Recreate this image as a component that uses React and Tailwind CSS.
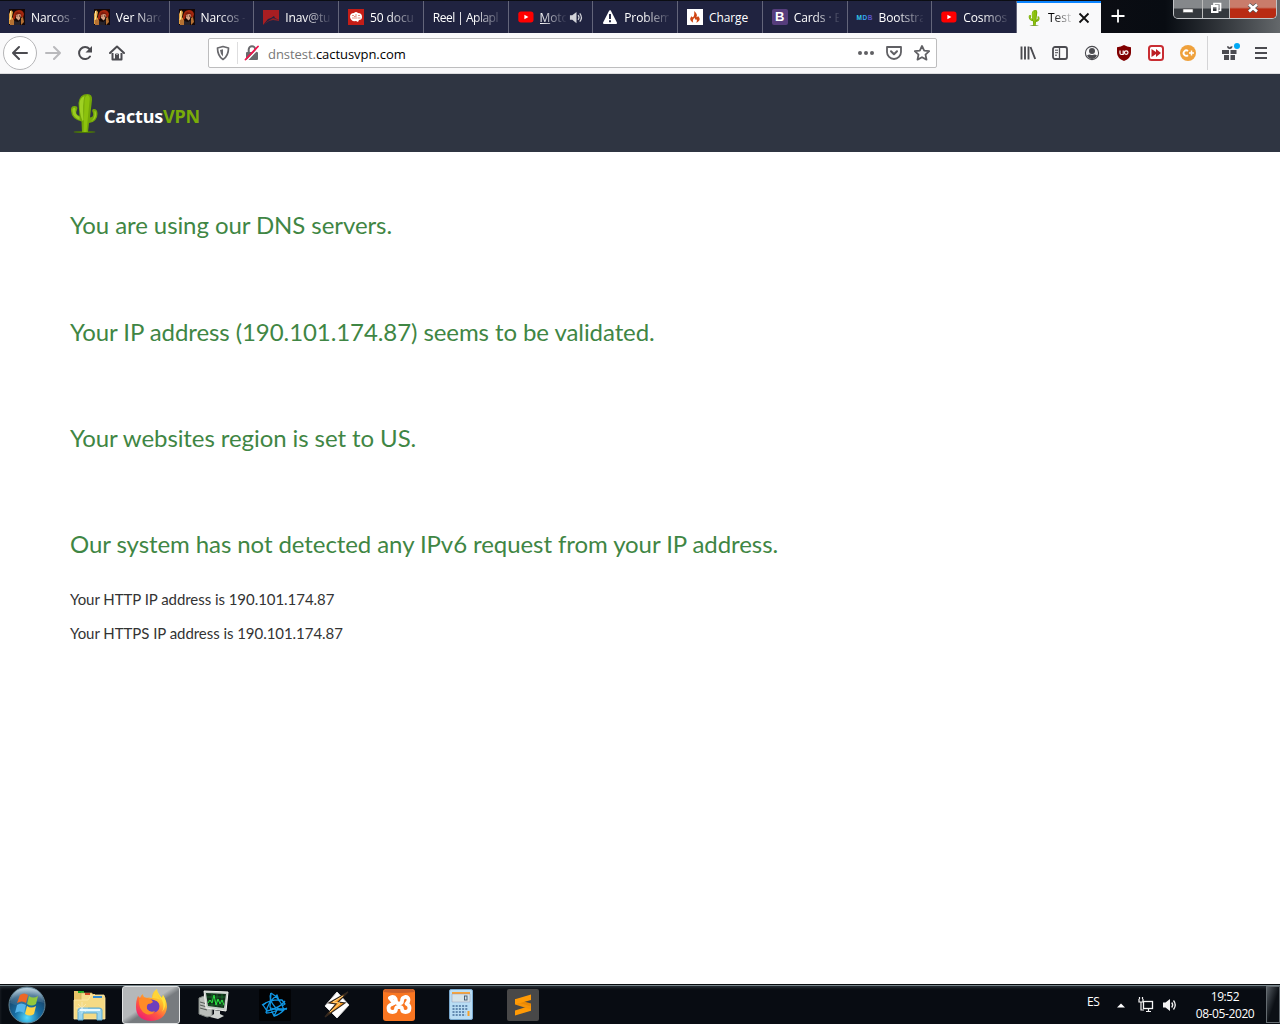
import React from "react";

const Portrait = () => (
  <svg viewBox="0 0 16 16" className="size-4 shrink-0">
    <rect width="16" height="16" fill="#140706" />
    <path d="M0 5l2-4 2 2-1 5 2 3-2 4H0z" fill="#e0a040" />
    <path d="M4 7Q5 1 10 1q4 0 5 4l-1 4-2-1-1-3-4 1-1 4-2 1z" fill="#a3260e" />
    <path d="M7 5q3-1 5 0l-1 5-1.500 1.500L7 9z" fill="#d8a283" />
    <path d="M6 5l2-2 4 1 1 2-3-1-3 1z" fill="#7b1a0b" />
    <path d="M7.500 7h1M10 7h1" stroke="#3c130d" />
    <path d="M1 10l4 1 1 5H1zM12 9l2-1 1 5-3 3z" fill="#b57133" />
    <path d="M5 12l4 1 3-2-1 5H5z" fill="#26222a" />
    <path d="M1.500 2l.5 5-1 4" stroke="#fff0a8" fill="none" />
  </svg>
);
const RedFlag = () => (
  <svg viewBox="0 0 16 16" className="size-4 shrink-0">
    <path d="M0 1h16v10l-4-2-1-2-3 2-3 1-5 6z" fill="#a81e22" />
    <path d="M0 16l5-4 5-3 6 2v1l-6-1-4 1z" fill="#8c2128" />
  </svg>
);
const Brain = () => (
  <svg viewBox="0 0 16 16" className="size-4 shrink-0">
    <rect width="16" height="16" fill="#c41d17" />
    <path d="M2 8q0-4 4-4 2-2 4 0 4 0 4 4 0 3-3 3l-1 2-2-1q-5 1-6-4z" fill="#fff" />
    <path d="M4 6.500h2M4 9h3M8 5v5M10 6.500h2M9.500 9h3M6 7.500h1.500" stroke="#d9604f" fill="none" strokeWidth=".7" />
  </svg>
);
const Tube = () => (
  <svg viewBox="0 0 16 16" className="size-4 shrink-0">
    <rect x="0.3" y="2.5" width="15.2" height="11" rx="2.7" fill="#f00" />
    <path d="M6.400 5.800v4.500l4-2.200z" fill="#fff" />
  </svg>
);
const Warning = () => (
  <svg viewBox="0 0 16 16" className="size-4 shrink-0">
    <path d="M8 2.200L14 14H2z" fill="#fff" stroke="#fff" strokeWidth="2" strokeLinejoin="round" />
    <path d="M8 5v5M8 11.200v2" stroke="#202340" strokeWidth="1.900" />
  </svg>
);
const Flame = () => (
  <svg viewBox="0 0 16 16" className="size-4 shrink-0">
    <rect width="16" height="16" fill="#fff" />
    <path d="M7 2q4 3 2.500 6 1 .5 1.500-1Q14 10 11.800 12q-1 1.300-2.500 1.700 1.500-2-.2-3.800-.3 1-1 .5-.6-1 0-2-3.200 2-1.900 5.300Q3 12 3.200 9.500 3.500 8 5 7q-.3 1.500.6 1.300Q7 8 7.200 5.500 7.500 3.700 7 2z" fill="#cf4513" />
  </svg>
);
const BootB = () => (
  <span className="flex size-4 shrink-0 items-center justify-center rounded-[2px] bg-[#563d7c] font-['Liberation_Sans'] text-[13px] leading-4 font-bold text-white">B</span>
);
const Mdb = () => (
  <span className="flex size-4 shrink-0 items-center justify-between pt-px font-['Liberation_Sans'] text-[6.5px] font-bold">
    <span className="text-[#31c7ee]">M</span><span className="text-[#36a5f5]">D</span><span className="text-[#5b55c8]">B</span>
  </span>
);
const Cactus = ({ className }) => (
  <svg viewBox="0 0 27 39" className={className}>
    <ellipse cx="14" cy="38" rx="11" ry="1" fill="#4b7607" />
    <path d="M8 9Q9 0 17 0q5 0 4.500 6L19.500 23.500q4-.5 3-4.500-2-4 1-4 3.500 0 3.500 5 0 7.500-8.500 9l-1 9H11.500l-.5-10.500Q1 25 .5 17 0 12 4 12q4 0 2.500 4Q4 20 9 22z" fill="#74a708" />
    <path d="M17 1q3 1 2 6l-3 31h-3l1-31q0-5 3-6z" fill="#8cc20d" />
    <path d="M9 10q0-6 5-8-2 7-1 24l-1 1q-3-7-3-17z" fill="#9ed123" />
    <path d="M2 15q2-3 3 0-1 5 4 8v3Q2 23 2 17zM24 17q2 0 1.500 5-1 4-5 5 4-3 3.500-8z" fill="#9acb20" />
  </svg>
);
const Speaker = ({ className }) => (
  <svg viewBox="0 0 16 16" className={className}>
    <path d="M1 5.500h2.500L8 2v12l-4.500-3.500H1z" fill="currentColor" />
    <path d="M9.700 5.500q2 2.500 0 5M11.500 3.500q3.500 4.500 0 9" fill="none" stroke="currentColor" strokeWidth="1.300" />
  </svg>
);

const tabs = [
  { icon: <Portrait />, title: "Narcos -" },
  { icon: <Portrait />, title: "Ver Narc" },
  { icon: <Portrait />, title: "Narcos -" },
  { icon: <RedFlag />, title: "Inav@tu" },
  { icon: <Brain />, title: "50 docu" },
  { icon: null, title: "Reel | Aplapl" },
  { icon: <Tube />, title: "Moto", sound: true },
  { icon: <Warning />, title: "Problem" },
  { icon: <Flame />, title: "Charge", plain: true },
  { icon: <BootB />, title: "Cards · B" },
  { icon: <Mdb />, title: "Bootstra" },
  { icon: <Tube />, title: "Cosmos" },
];

function Tab({ icon, title, sound, plain }) {
  return (
    <div className="flex h-8 w-[84.75px] shrink-0 items-center border-r border-[#63657a] pl-[9px] text-white">
      {icon}
      <div className={`${icon ? "ml-[6px]" : ""} ${sound ? "w-[26px] shrink-0" : "mr-2 flex-1"} overflow-hidden whitespace-nowrap pt-px text-[12px] leading-[17px] ${icon ? "tracking-[-0.1px]" : "tracking-[-0.5px]"} ${plain ? "" : "[mask-image:linear-gradient(to_right,black_calc(100%_-_26px),transparent_105%)]"}`}>
        {sound ? <><span className="underline underline-offset-1">M</span>{title.slice(1)}</> : title}
      </div>
      {sound && <Speaker className="ml-[3px] size-[15px] shrink-0 text-[#d2d3d9]" />}
    </div>
  );
}

const WindowButtons = () => (
  <div className="ml-auto mr-[3px] -mt-px flex h-[19px] w-[104px] self-start overflow-hidden rounded-b-[5px] border border-t-0 border-[#c2c4c7] bg-[#55595d]">
    <div className="flex w-[29px] items-center justify-center border-r border-[#bbb] bg-linear-to-b from-[#85888b] from-45% to-[#34383d] to-50%">
      <svg viewBox="0 0 14 16" className="h-4 w-[14px]"><rect x="2" y="8" width="10" height="3.500" fill="#fff" stroke="#555" strokeWidth=".6" /></svg>
    </div>
    <div className="flex w-[27px] items-center justify-center border-r border-[#bbb] bg-linear-to-b from-[#85888b] from-45% to-[#34383d] to-50%">
      <svg viewBox="0 0 14 14" className="mb-[2px] size-[14px]" fill="none"><path d="M5 4V2.500h6.500v7H9.500" stroke="#fff" strokeWidth="1.700" /><rect x="3" y="5" width="5.500" height="6" stroke="#fff" strokeWidth="2" /></svg>
    </div>
    <div className="flex flex-1 items-center justify-center bg-linear-to-b from-[#c97c6b] from-40% to-[#b92b13] to-50%">
      <svg viewBox="0 0 14 14" className="mb-[2px] size-[14px]"><path d="M3 3.500l8 7M11 3.500l-8 7" stroke="#555" strokeWidth="4" /><path d="M3 3.500l8 7M11 3.500l-8 7" stroke="#fff" strokeWidth="2.600" /></svg>
    </div>
  </div>
);

function TabStrip() {
  return (
    <div className="flex h-[33px] bg-linear-to-r from-[#0b0d13] from-[86%] via-[#080c12] via-[91%] to-[#64686b] pt-px">
      <div className="flex w-[1017px] shrink-0 overflow-hidden bg-[#202340]">
        {tabs.map((t, i) => <Tab key={i} {...t} />)}
      </div>
      <div className="flex w-[84px] shrink-0 items-center border-t-2 border-[#0a84ff] bg-[#f9f9fa] pl-[11px] text-black">
        <Cactus className="mb-px h-4 w-[12px] shrink-0" />
        <div className="ml-2 w-[23px] overflow-hidden whitespace-nowrap text-[12px] leading-4 [mask-image:linear-gradient(to_right,black_20%,transparent_115%)]">Test</div>
        <svg viewBox="0 0 12 12" className="ml-[7px] size-3 shrink-0"><path d="M1.500 1.500l9 9M10.500 1.500l-9 9" stroke="#111" strokeWidth="1.800" /></svg>
      </div>
      <svg viewBox="0 0 14 14" className="ml-[10px] mt-2 size-[14px] shrink-0"><path d="M7 .5v13M.5 7h13" stroke="#fff" strokeWidth="1.800" /></svg>
      <WindowButtons />
    </div>
  );
}

function Toolbar() {
  return (
    <div className="flex h-[41px] items-center border-b border-[#dcdcde] bg-[#f9f9fa] text-[#4b4b50]">
      <div className="ml-[3px] flex size-[34px] shrink-0 items-center justify-center rounded-full border border-[#b5b5b7] bg-white">
        <svg viewBox="0 0 16 16" className="size-4" fill="none" stroke="currentColor" strokeWidth="2" strokeLinecap="round" strokeLinejoin="round"><path d="M15 8H1M7 2L1 8l6 6" /></svg>
      </div>
      <svg viewBox="0 0 16 16" className="ml-2 size-4 shrink-0 text-[#b9b9bc]" fill="none" stroke="currentColor" strokeWidth="2" strokeLinecap="round" strokeLinejoin="round"><path d="M1 8h14M9 2l6 6-6 6" /></svg>
      <svg viewBox="0 0 16 16" className="ml-4 size-4 shrink-0" fill="none" stroke="currentColor" strokeWidth="2"><path d="M13 11.500A6 6 0 1 1 12.500 4" strokeLinecap="round" /><path d="M15 1v6.500H8.500z" fill="currentColor" stroke="none" /></svg>
      <svg viewBox="0 0 16 16" className="ml-4 size-4 shrink-0" fill="none" stroke="currentColor" strokeWidth="2" strokeLinejoin="round"><path d="M1 8l7-6.500L15 8" strokeLinecap="round" /><path d="M3.500 8v6.500h9V8M8 14v-4" /><path d="M6.500 14V9h3v5" strokeWidth="1" /></svg>

      <div className="ml-[83px] flex h-[30px] w-[729px] shrink-0 items-center rounded-[2px] border border-[#bdbdbe] bg-white">
        <svg viewBox="0 0 16 16" className="ml-[6px] size-4 shrink-0 text-[#69696d]"><path d="M8 1.500l5.500 1.500q0 8-5.500 11.500Q2.500 11 2.500 3z" fill="none" stroke="currentColor" strokeWidth="1.700" strokeLinejoin="round" /><path d="M8 4.200v7.200Q5.300 9 5 5z" fill="currentColor" /></svg>
        <div className="ml-[6px] h-[22px] w-px bg-[#dededf]" />
        <svg viewBox="0 0 16 16" className="ml-[6px] size-4 shrink-0"><path d="M4.700 8V4.500a3.300 3.300 0 0 1 6.600 0V8" fill="none" stroke="#69696d" strokeWidth="2" /><rect x="2" y="7" width="12" height="8" rx="1" fill="#69696d" /><path d="M2.500 16L15 2.800" stroke="#fff" strokeWidth="1.500" /><path d="M1.500 14.500l12.500-13" stroke="#f1144c" strokeWidth="1.800" strokeLinecap="round" /></svg>
        <div className="ml-2 whitespace-nowrap pt-px text-[13px] leading-5 tracking-[-0.05px] text-black"><span className="text-[#777]">dnstest.</span>cactusvpn.com</div>
        <svg viewBox="0 0 16 16" className="ml-auto size-4 shrink-0 fill-[#606064]"><circle cx="2" cy="8" r="2" /><circle cx="8" cy="8" r="2" /><circle cx="14" cy="8" r="2" /></svg>
        <svg viewBox="0 0 16 16" className="ml-3 size-4 shrink-0" fill="none" stroke="#606064" strokeWidth="1.800" strokeLinecap="round" strokeLinejoin="round"><path d="M1 2h14v5A7 7 0 0 1 1 7z" /><path d="M5 6.200l3 3 3-3" strokeWidth="2" /></svg>
        <svg viewBox="0 0 16 16" className="ml-3 mr-[6px] size-4 shrink-0" fill="none" stroke="#606064" strokeWidth="1.800" strokeLinejoin="round"><path d="M8 1l2.200 4.600 5 .6-3.700 3.400 1 5L8 12.200l-4.500 2.400 1-5L.8 6.200l5-.6z" /></svg>
      </div>

      <svg viewBox="0 0 16 16" className="ml-[83px] size-4 shrink-0" fill="none" stroke="currentColor" strokeWidth="1.900"><path d="M1.500 1.500v13M5 1.500v13M8.500 1.500v13M10.500 2l4.700 12" /></svg>
      <svg viewBox="0 0 16 16" className="ml-4 size-4 shrink-0" fill="none" stroke="currentColor" strokeWidth="1.800"><rect x="1" y="2" width="14" height="12" rx="2" /><path d="M7.500 2v12" strokeWidth="1.300" /><path d="M3 5.200h3M3 7.700h3M3 10.200h2" strokeWidth="1" /></svg>
      <svg viewBox="0 0 16 16" className="ml-4 size-4 shrink-0" fill="currentColor"><circle cx="8" cy="8" r="6.600" fill="none" stroke="currentColor" strokeWidth="1.100" /><circle cx="8" cy="6" r="3" /><path d="M3 10.500q1-1 3-1 2 1 4 0 2 0 3 1-2 3.500-5 3.500t-5-3.500z" /></svg>
      <svg viewBox="0 0 16 16" className="ml-4 size-4 shrink-0"><path d="M8 0q3 2 7 2.200V8q0 5-7 8Q1 13 1 8V2.200Q5 2 8 0z" fill="#800000" /><path d="M4 5.500v2.800q0 1.200 1.500 1.200h1.700V5.500" fill="none" stroke="#fff" strokeWidth="1.200" /><circle cx="10.200" cy="7.600" r="1.800" fill="none" stroke="#fff" strokeWidth="1.200" /></svg>
      <svg viewBox="0 0 16 16" className="ml-4 size-4 shrink-0"><rect x="1" y="1" width="14" height="14" rx="2.500" fill="#fff" stroke="#c92d32" strokeWidth="2" /><path d="M3.500 4L8 7V4l5 4-5 4V9l-4.500 3z" fill="#bd2025" /></svg>
      <svg viewBox="0 0 16 16" className="ml-4 size-4 shrink-0"><circle cx="8" cy="8" r="8" fill="#efa13c" /><path d="M8 6A2.700 2.700 0 1 0 8 10.200" stroke="#fff" strokeWidth="1.800" fill="none" /><path d="M9 8h5M11.500 5.500v5" stroke="#fff" strokeWidth="1.500" /></svg>
      <div className="ml-[11px] h-[34px] w-px shrink-0 bg-[#d4d4d6]" />
      <div className="relative ml-[14px] size-4 shrink-0">
        <svg viewBox="0 0 16 16" className="size-4" fill="currentColor"><path d="M0 5h7v4H0zM8.500 5H14.500v4H8.500zM2 10h5v5H2zM8.500 10H13v5H8.500z" /><path d="M7.750 4Q5 3.700 5 1.200q2-.3 2.750 1.200.75-1.500 2.750-1.200 0 2.500-2.750 2.800z" /></svg>
        <div className="absolute -top-[2px] left-3 size-[6px] rounded-full bg-[#00a9f5]" />
      </div>
      <svg viewBox="0 0 16 16" className="ml-[15px] size-4 shrink-0" stroke="currentColor" strokeWidth="1.900"><path d="M2 3h12M2 8h12M2 13h12" /></svg>
    </div>
  );
}

const Start = () => (
  <svg viewBox="0 0 40 40" className="size-10">
    <defs>
      <radialGradient id="orb" cx=".5" cy=".85" r=".85"><stop offset="0" stopColor="#54dcff" /><stop offset=".4" stopColor="#176da3" /><stop offset=".75" stopColor="#18486f" /><stop offset="1" stopColor="#8babc0" /></radialGradient>
      <linearGradient id="gloss" x2="0" y2="1"><stop stopColor="#d3e4ed" stopOpacity=".75" /><stop offset="1" stopColor="#638ba7" stopOpacity=".15" /></linearGradient>
    </defs>
    <circle cx="20" cy="20" r="18" fill="url(#orb)" stroke="#638493" />
    <path d="M3 18Q5 3 20 3t17 15Q28 14 19 20 10 22 3 18z" fill="url(#gloss)" />
    <path d="M13 10q4-3 8 0l-2 8q-4-3-9 0z" fill="#ee6726" />
    <path d="M22 11q4 3 9 0l-2 8q-4 3-9 0z" fill="#93c83d" />
    <path d="M10 20q4-3 9 0l-2 8q-4-3-9 0z" fill="#55b5ec" />
    <path d="M20 21q4 3 9 0l-2 8q-4 3-9 0z" fill="#ffd446" />
  </svg>
);
const Explorer = () => (
  <svg viewBox="0 0 34 32" className="h-8 w-[34px]">
    <path d="M2 2h9l2 3h10v24H2z" fill="#e7c267" /><path d="M6 2h6v2H6z" fill="#19ab29" />
    <path d="M9 4h11l1 3h9v22H9z" fill="#f6dc8d" stroke="#c9a452" strokeWidth=".6" /><path d="M13 4h5v2h-5z" fill="#d44727" />
    <path d="M2 11h14l3-5h13l1 3v21H2z" fill="#f5da84" stroke="#ffebad" strokeWidth=".8" /><path d="M21 7h9v2h-9z" fill="#338dd2" />
    <path d="M6 31V21q0-2 3-2h18q3 0 3 2v10h-5v-7H11v7z" fill="#9ad5ed" stroke="#5caad0" />
    <path d="M8 21h20" stroke="#e8fbff" strokeWidth="2" /><path d="M10 13v12M4 19h12M6 15l8 8M14 15l-8 8" stroke="#fff" strokeOpacity=".5" strokeWidth=".7" />
  </svg>
);
const Firefox = () => (
  <svg viewBox="0 0 32 32" className="size-8">
    <defs><linearGradient id="fox" x1=".85" y1="0" x2=".2" y2="1"><stop stopColor="#fff044" /><stop offset=".35" stopColor="#ffb52b" /><stop offset=".65" stopColor="#ff5642" /><stop offset="1" stopColor="#ed1975" /></linearGradient></defs>
    <path d="M3 7l2 2q1-3 3-4 0 3 3 4 3-1 6 0 0-6 5-9 0 4 5 9l1-3q4 6 4 12-1 13-16 14Q1 31 1 18q0-7 2-11z" fill="url(#fox)" />
    <path d="M11 15q2-6 8-4 7 2 5 9-3 5-9 3-5-2-4-8z" fill="#6d3fbd" />
    <path d="M4 10q6-3 11 0 2 1 3 3-2 2-5 2-2 2-1 5 3 4 8 2-3 5-9 3Q3 21 4 10z" fill="#ff8b28" />
    <path d="M22 0q0 5 5 11 3 6 0 12 5-6 3-13l-2-4-1 3q-5-5-5-9z" fill="#ffe33b" />
    <path d="M17 9q1-5 5-9-1 6 4 11-4-2-9-2z" fill="#ffd43a" />
  </svg>
);
const Monitor = () => (
  <svg viewBox="0 0 32 32" className="size-8">
    <path d="M2 9l5-2 8 2v18l-5 1-8-3z" fill="#b9bdb9" stroke="#838985" /><path d="M3 13l7 2M3 16l7 2M3 19l7 2" stroke="#555b57" />
    <path d="M7 2l24 1-2 19-20-3z" fill="#c6cdc9" stroke="#f2f3ef" /><path d="M9 4l20 1-2 14-16-2z" fill="#102e18" />
    <path d="M10 8h18M11 12h17M11 16h16M15 4v13M20 5v13M25 5v14" stroke="#1d7531" strokeWidth=".7" /><path d="M11 14l2-3 2 3 2-8 2 10 2-6 2 5 2-4 2 5" stroke="#2be942" fill="none" strokeWidth="1" />
    <path d="M17 21l6 1v3l4 2-6 3-8-2 4-3z" fill="#cfd3d0" />
  </svg>
);
const Swirl = () => (
  <svg viewBox="0 0 32 32" className="size-8">
    <rect width="32" height="32" rx="1.500" fill="#020305" />
    <g fill="none" stroke="#1097e5" strokeWidth="1.300" strokeLinejoin="round">
      <path d="M12 4q9 5 13 17-5 5-10 6M3 16q9-6 20-5l3 4-3 2M7 24q1-10 11-18l2 6" />
      <path d="M26 12Q21 19 8 22l-4-6 3-2M7 24q7 0 13-4l8 0M12 4l-1 14 4 9 4-8" />
      <path d="M12 4q-3 6 4 14l8 4M28 19q-6 4-16 0" />
    </g>
  </svg>
);
const Bolt = () => (
  <svg viewBox="0 0 32 32" className="size-8">
    <path d="M16 3l12 13-12 13L4 17z" fill="#fff" stroke="#ddd" />
    <path d="M27 3L8 14l7 1L4 28l20-14-7-1z" fill="#fc9d24" stroke="#34281e" strokeWidth="1.200" /><path d="M22 7l-10 6 7 1-10 9" fill="none" stroke="#ffd281" />
  </svg>
);
const Xampp = () => (
  <svg viewBox="0 0 32 32" className="size-8">
    <rect width="32" height="32" rx="3" fill="#f97621" /><path d="M3 0h26l3 3q-16 2-32 0z" fill="#ca5e28" />
    <g fill="none" stroke="#fff" strokeWidth="3.800" strokeLinecap="round" strokeLinejoin="round">
      <path d="M7 9q2-2 4.500-.5 1.500 1 1.500 3.500 0 2.500 3 2.500t3-2.500q0-3.500 3-4 3.500-.3 3.500 3 0 2-2 3.700 3 1.300 3 4.300 0 4-4 4-3.500 0-3.500-3 0-2-3-2t-3 2q0 3-3.500 3-4 0-4-4 0-3 4-4" />
      <path d="M7 9l4 5" />
    </g>
  </svg>
);
const Calculator = () => (
  <svg viewBox="0 0 24 31" className="h-[31px] w-6">
    <rect x=".5" y=".5" width="23" height="30" rx="1.500" fill="#b9ddf4" stroke="#79a9ce" /><path d="M3 3h18v2H3z" fill="#f7a33b" /><path d="M3 5h18v8H3z" fill="#d5e3e9" stroke="#88a" strokeWidth=".4" />
    <rect x="15.500" y="7" width="2.500" height="4" fill="none" stroke="#41546a" strokeWidth=".9" />
    <path d="M3.500 17h16M3.500 20h16M3.500 23h13M3.500 26h13" stroke="#6289b0" strokeWidth="2" strokeDasharray="2 1.200" /><path d="M19.500 22v5" stroke="#f6a12a" strokeWidth="2" />
  </svg>
);
const Sublime = () => (
  <svg viewBox="0 0 32 32" className="size-8">
    <rect width="32" height="32" rx="2" fill="#484848" />
    <path d="M8 15l16 4.500v-5L8 10z" fill="#e98805" /><path d="M8 10.200L24 5.500V11L8 15.500zM8 21.500l16-5v5.200L8 26.500z" fill="#ff9a05" /><path d="M8 15.500l5-1.500 11 3.500v3L8 15.500z" fill="#f59308" />
  </svg>
);

const apps = [Explorer, Firefox, Monitor, Swirl, Bolt, Xampp, Calculator, Sublime];

function Taskbar() {
  return (
    <div className="flex h-10 shrink-0 items-center border-t border-[#080b0e] bg-[#080c12] font-['Open_Sans'] text-[12px] text-white shadow-[inset_0_1px_0_#77858b,inset_0_3px_3px_#252c32]">
      <div className="ml-[7px] mr-[13px] shrink-0"><Start /></div>
      {apps.map((Icon, i) => (
        <div key={i} className={`mr-1 flex h-[38px] w-[58px] shrink-0 items-center justify-center ${i === 1 ? "rounded-[3px] border border-[#e2e4e5] bg-linear-to-br from-[#b5b8ba] from-45% to-[#777b7f] to-55%" : ""}`}><Icon /></div>
      ))}
      <div className="mb-[5px] ml-auto w-[18px] tracking-[-0.4px]">ES</div>
      <svg viewBox="0 0 8 5" className="ml-3 mt-[2px] h-[5px] w-2"><path d="M0 4.500L4 .5l4 4z" fill="#fff" /></svg>
      <svg viewBox="0 0 16 16" className="ml-[13px] size-4" fill="none" stroke="#f5f5f5"><rect x="5.500" y="4.500" width="9" height="7" strokeWidth="1.300" /><path d="M8 14.500h5M10.500 12v2M1 2v3h4V2M3 5v8h3M1.500 0v2M4.500 0v2" strokeWidth="1.200" /></svg>
      <Speaker className="ml-2 size-4 text-[#f3f3f3]" />
      <div className="ml-[15px] w-[64px] text-center leading-[17px] tracking-[-0.4px]"><div>19:52</div><div className="whitespace-nowrap">08-05-2020</div></div>
      <div className="ml-[9px] h-[37px] w-[14px] border border-[#646b70] bg-linear-to-br from-[#596066] to-[#0c1015] to-55%" />
    </div>
  );
}

export default function App() {
  return (
    <div className="flex h-[1024px] w-[1280px] flex-col overflow-hidden bg-white font-['Open_Sans',sans-serif]">
      <TabStrip />
      <Toolbar />
      <header className="flex h-[78px] shrink-0 bg-[#2f3542] pl-[70px]">
        <Cactus className="mt-5 h-[39px] w-7" />
        <div className="ml-[6px] mt-[30px] font-['Noto_Sans'] text-[18px] leading-[25px] font-bold tracking-[-0.2px] text-white">Cactus<span className="text-[#79ac09]">VPN</span></div>
      </header>
      <main className="flex-1 pl-[70px] pt-[55px] font-['Lato',sans-serif] text-[#333]">
        <div className="flex flex-col text-[24px] leading-9 tracking-[-0.08px] text-[#3f8644]">
          <h2 className="mb-[71px]">You are using our DNS servers.</h2>
          <h2 className="mb-[70px]">Your IP address (190.101.174.87) seems to be validated.</h2>
          <h2 className="mb-[70px]">Your websites region is set to US.</h2>
          <h2>Our system has not detected any IPv6 request from your IP address.</h2>
        </div>
        <div className="mt-[25px] flex flex-col gap-[10px] text-[15px] leading-6 tracking-[-0.05px]">
          <p>Your HTTP IP address is 190.101.174.87</p>
          <p>Your HTTPS IP address is 190.101.174.87</p>
        </div>
      </main>
      <Taskbar />
    </div>
  );
}
